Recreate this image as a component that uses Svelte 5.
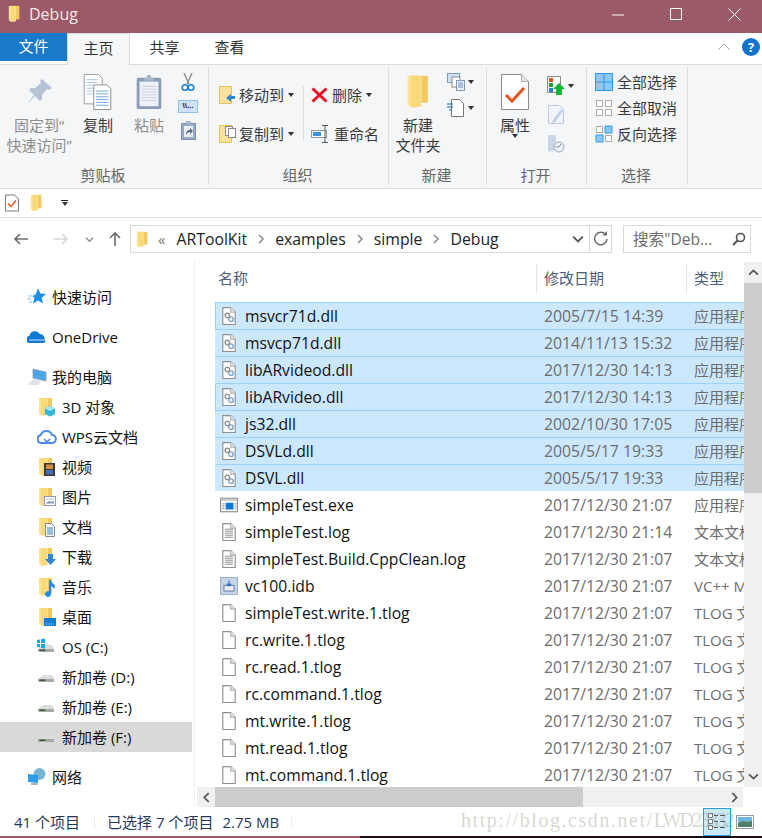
<script lang="ts">
const crumbs = ["ARToolKit", "examples", "simple", "Debug"];

const nav = [
  [{ label: "快速访问", icon: "star" }],
  [{ label: "OneDrive", icon: "cloud" }],
  [
    { label: "我的电脑", icon: "pc" },
    { label: "3D 对象", icon: "cube", sub: true },
    { label: "WPS云文档", icon: "wps", sub: true },
    { label: "视频", icon: "film", sub: true },
    { label: "图片", icon: "pic", sub: true },
    { label: "文档", icon: "doc", sub: true },
    { label: "下载", icon: "down", sub: true },
    { label: "音乐", icon: "music", sub: true },
    { label: "桌面", icon: "desk", sub: true },
    { label: "OS (C:)", icon: "osdrive", sub: true },
    { label: "新加卷 (D:)", icon: "drive", sub: true },
    { label: "新加卷 (E:)", icon: "drive", sub: true },
    { label: "新加卷 (F:)", icon: "drive", sub: true, active: true }
  ],
  [{ label: "网络", icon: "net" }]
];

const files = [
  { name: "msvcr71d.dll", date: "2005/7/15 14:39", type: "应用程序扩展", icon: "dll", sel: true, boxed: true },
  { name: "msvcp71d.dll", date: "2014/11/13 15:32", type: "应用程序扩展", icon: "dll", sel: true },
  { name: "libARvideod.dll", date: "2017/12/30 14:13", type: "应用程序扩展", icon: "dll", sel: true },
  { name: "libARvideo.dll", date: "2017/12/30 14:13", type: "应用程序扩展", icon: "dll", sel: true, boxed: true },
  { name: "js32.dll", date: "2002/10/30 17:05", type: "应用程序扩展", icon: "dll", sel: true },
  { name: "DSVLd.dll", date: "2005/5/17 19:33", type: "应用程序扩展", icon: "dll", sel: true },
  { name: "DSVL.dll", date: "2005/5/17 19:33", type: "应用程序扩展", icon: "dll", sel: true },
  { name: "simpleTest.exe", date: "2017/12/30 21:07", type: "应用程序", icon: "exe" },
  { name: "simpleTest.log", date: "2017/12/30 21:14", type: "文本文档", icon: "log" },
  { name: "simpleTest.Build.CppClean.log", date: "2017/12/30 21:07", type: "文本文档", icon: "log" },
  { name: "vc100.idb", date: "2017/12/30 21:07", type: "VC++ Minimal", icon: "idb" },
  { name: "simpleTest.write.1.tlog", date: "2017/12/30 21:07", type: "TLOG 文件", icon: "blank" },
  { name: "rc.write.1.tlog", date: "2017/12/30 21:07", type: "TLOG 文件", icon: "blank" },
  { name: "rc.read.1.tlog", date: "2017/12/30 21:07", type: "TLOG 文件", icon: "blank" },
  { name: "rc.command.1.tlog", date: "2017/12/30 21:07", type: "TLOG 文件", icon: "blank" },
  { name: "mt.write.1.tlog", date: "2017/12/30 21:07", type: "TLOG 文件", icon: "blank" },
  { name: "mt.read.1.tlog", date: "2017/12/30 21:07", type: "TLOG 文件", icon: "blank" },
  { name: "mt.command.1.tlog", date: "2017/12/30 21:07", type: "TLOG 文件", icon: "blank" }
];
</script>

{#snippet folderShape()}
  <path d="M3 1h11v15H3z" fill="#f2c95f" />
  <path d="M1 1h8l1 1v16l-6 1-3-2z" fill="#fbe29a" />
  <path d="M3 1h6v17H3z" fill="#fad978" />
{/snippet}

{#snippet folder(w = 16, h = 20)}
  <svg width={w} height={h} viewBox="0 0 16 20" preserveAspectRatio="none">{@render folderShape()}</svg>
{/snippet}

{#snippet pageShape(lines = 0)}
  <path d="M2.5.5h7l4 4v11h-11z" fill="#fff" stroke="#8f8f8f" />
  <path d="M9.5.5v4h4" fill="#eee" stroke="#b0b0b0" />
  {#each Array(lines) as _, i}
    <path d={`M4.5 ${5.5 + i * 1.8}h7`} stroke="#9c9c9c" stroke-width="1" />
  {/each}
{/snippet}

{#snippet fileIcon(kind)}
  <svg width="18" height="18" viewBox="0 0 16 16">
    {#if kind === "dll"}
      {@render pageShape()}
      <circle cx="6.5" cy="7.5" r="2" fill="none" stroke="#8d8d8d" stroke-width="1.2" />
      <circle cx="9.8" cy="10.8" r="2" fill="none" stroke="#7d9fc0" stroke-width="1.2" />
    {:else if kind === "exe"}
      <rect x=".5" y="2" width="15" height="12" fill="#fff" stroke="#8c8c8c" />
      <rect x="1" y="2.5" width="14" height="2" fill="#c9cdd2" />
      <rect x="5" y="6" width="7" height="6" fill="#0a78d7" />
      <path d="M2 7h2M2 9h2M2 11h2M13 7h1.500M13 9h1.500M13 11h1.500" stroke="#9a9a9a" />
    {:else if kind === "log"}
      {@render pageShape(5)}
    {:else if kind === "idb"}
      <rect x=".5" y=".5" width="15" height="15" fill="#c8d6ea" stroke="#9db2cf" />
      <rect x="3.500" y="7.500" width="9" height="5" fill="#e8eef6" stroke="#7088aa" />
      <path d="M8 3v5M6 6l2 2 2-2" stroke="#2d6fb5" fill="none" />
    {:else}
      {@render pageShape()}
    {/if}
  </svg>
{/snippet}

{#snippet driveShape()}
  <path d="M1 12l5-4h9l2 4v2H1z" fill="#dcdcdc" />
  <path d="M1 12h16v3H2l-1-1z" fill="#a9a9a9" />
  <rect x="2.500" y="12.500" width="6" height="1.500" fill="#3d5a3d" />
{/snippet}

{#snippet navIcon(kind)}
  <svg width="20" height="20" viewBox="0 0 20 20">
    {#if kind === "star"}
      <path d="M11 1l2.300 5.500 5.700.5-4.300 3.800 1.300 5.700-5-3-5 3 1.300-5.700-2-1.800 3.400-1.500z" fill="#1f8fe6" />
      <path d="M1 9h4M0 12h4M2 15h3" stroke="#7fc4f3" stroke-width="1.200" />
    {:else if kind === "cloud"}
      <path d="M3 16a3.500 3.500 0 0 1-.5-7 5.500 5.500 0 0 1 10.200-2 4.500 4.500 0 0 1 4.800 4.500A2.800 2.800 0 0 1 17 16z" fill="#0f78d4" />
      <path d="M2 13h17" stroke="#fff" stroke-width=".8" />
    {:else if kind === "pc"}
      <path d="M6 2l13 3v9L6 11z" fill="#4aa6e8" stroke="#8a9aa8" stroke-width=".7" />
      <path d="M1 17l6-5 8 2-4 4H3z" fill="#dfe3e6" />
    {:else if kind === "wps"}
      <path d="M5.500 17a4 4 0 0 1-.8-7.900 6 6 0 0 1 11.300-.2 4 4 0 0 1-.5 8.100z" fill="#fff" stroke="#4f8bea" stroke-width="2" transform="translate(-1 -1)" />
      <path d="M7 12l3 3 3-3" fill="none" stroke="#4f8bea" stroke-width="1.600" />
    {:else if kind === "net"}
      <circle cx="12.500" cy="7" r="6" fill="#7ab4cf" />
      <path d="M1 7l10 1v8l-10-1z" fill="#2e9be6" />
      <path d="M4 16h6l1 2H4z" fill="#a9b4bb" />
    {:else if kind === "drive"}
      {@render driveShape()}
    {:else if kind === "osdrive"}
      {@render driveShape()}
      <path d="M0 3l3-.5V6H0zM4 2.300L8 1.500V6H4zM0 7h3v3.500L0 10zM4 7h4v4.500L4 11z" fill="#10a8ee" />
    {:else}
      <g transform="translate(1 0)">{@render folderShape()}</g>
      {#if kind === "cube"}
        <path d="M13 9l5 2.500v5.500l-5 2.500-5-2.500v-5.500z" fill="#34b5d6" />
        <path d="M13 9l5 2.500-5 2.500-5-2.500z" fill="#a5e6f2" />
      {:else if kind === "film"}
        <rect x="7" y="6" width="11" height="13" fill="#3a3a3a" />
        <rect x="9" y="7.500" width="7" height="4.500" fill="#d88b3a" />
        <rect x="9" y="13" width="7" height="4.500" fill="#4a6fb8" />
      {:else if kind === "pic"}
        <rect x="7.500" y="9.500" width="11" height="9" fill="#fff" stroke="#8f9aa5" />
        <path d="M9 16l3-2 2 1 3-1v2.500H9z" fill="#7c93a8" />
        <path d="M9 12h8" stroke="#b9c4cc" />
      {:else if kind === "doc"}
        <path d="M8.500 6.500h6l3 3v10h-9z" fill="#fff" stroke="#7f8b96" />
        <path d="M10 11h6M10 13h6M10 15h6M10 17h6" stroke="#2d7fc4" />
      {:else if kind === "down"}
        <path d="M11 7h5v5h3l-5.500 6L8 12h3z" fill="#2f86d2" />
      {:else if kind === "music"}
        <path d="M12 3h2c0 3 4 4 4 7l-1 2c0-1-1.500-2.500-3-3v8a3 3 0 1 1-2-2.800z" fill="#1e90e8" />
      {:else if kind === "desk"}
        <rect x="7" y="11" width="12" height="8" fill="#0f7fd6" />
        <path d="M9 17h8" stroke="#fff" stroke-dasharray="1 1.500" />
      {/if}
    {/if}
  </svg>
{/snippet}

{#snippet chevron(dir = "right", stroke = "#8a8a8a", size = 10)}
  <svg class="chev" width={size} height={size} viewBox="0 0 10 10">
    {#if dir === "right"}
      <path d="M3 1l4 4-4 4" fill="none" stroke={stroke} stroke-width="1.500" />
    {:else if dir === "left"}
      <path d="M7 1L3 5l4 4" fill="none" stroke={stroke} stroke-width="1.500" />
    {:else if dir === "up"}
      <path d="M1 7l4-4 4 4" fill="none" stroke={stroke} stroke-width="1.500" />
    {:else}
      <path d="M1 3l4 4 4-4" fill="none" stroke={stroke} stroke-width="1.500" />
    {/if}
  </svg>
{/snippet}

<div class="window">
  <header class="titlebar">
    <span class="title-folder">{@render folder(13, 18)}</span>
    <span class="title-text">Debug</span>
    <div class="win-btns">
      <svg width="13" height="13" viewBox="0 0 13 13"><path d="M0 7h12" stroke="#fff" /></svg>
      <svg width="13" height="13" viewBox="0 0 13 13"><rect x=".5" y=".5" width="11" height="11" fill="none" stroke="#fff" /></svg>
      <svg width="13" height="13" viewBox="0 0 13 13"><path d="M.5.500l12 12M12.500.500l-12 12" stroke="#fff" /></svg>
    </div>
  </header>

  <nav class="tabs">
    <div class="tab file">文件</div>
    <div class="tab home">主页</div>
    <div class="tab">共享</div>
    <div class="tab">查看</div>
    <div class="tabs-right">
      <svg width="14" height="8" viewBox="0 0 14 8"><path d="M1 7l6-6 6 6" fill="none" stroke="#a9a9a9" /></svg>
      <span class="help">?</span>
    </div>
  </nav>

  <section class="ribbon">
    <div class="group clip">
      <div class="group-body">
        <div class="big pin disabled">
          <svg width="28" height="28" viewBox="0 0 28 28">
            <path d="M17 1l10 9-3 2-2-1-5 6 0 4-2 2-5-5-8 8 7-9-5-5 2-2 4 0 6-5-1-2z" fill="#b6c3d6" />
          </svg>
          <span>固定到“<br />快速访问”</span>
        </div>
        <div class="big copy">
          <svg width="32" height="38" viewBox="0 0 32 38">
            <path d="M1.500.5h15l4 4v27h-19z" fill="#fff" stroke="#9a9a9a" />
            <path d="M4 6h12M4 9h12M4 12h12M4 15h12M4 18h12M4 21h12" stroke="#a4c8ec" />
            <path d="M11.500 11.500h14l4 4v22h-18z" fill="#fff" stroke="#8a8a8a" />
            <path d="M14 18h13M14 21h13M14 24h13M14 27h13M14 30h13M14 33h13" stroke="#6aa5e2" />
          </svg>
          <span>复制</span>
        </div>
        <div class="big paste disabled">
          <svg width="28" height="38" viewBox="0 0 28 38">
            <rect x="1" y="4" width="26" height="33" rx="2" fill="#8b9cb8" />
            <rect x="4" y="8" width="20" height="26" fill="#eef1f7" />
            <path d="M6 13h16M6 16h16M6 19h16M6 22h16M6 25h16M6 28h16" stroke="#cbd3e2" />
            <path d="M9 7V4h3V1h4v3h3v3z" fill="#a7b4c9" />
          </svg>
          <span>粘贴</span>
        </div>
        <div class="clip-col">
          <svg width="14" height="19" viewBox="0 0 14 19">
            <path d="M3 0l5 11M11 0L6 11" stroke="#8a8a8a" stroke-width="1.400" />
            <circle cx="4" cy="14.500" r="2.800" fill="none" stroke="#1f7fd0" stroke-width="1.600" />
            <circle cx="10" cy="14.500" r="2.800" fill="none" stroke="#1f7fd0" stroke-width="1.600" />
          </svg>
          <span class="path-chip">\\...</span>
          <svg width="15" height="19" viewBox="0 0 15 19">
            <rect x=".5" y="2.500" width="14" height="16" fill="#98a9c4" stroke="#7f91ad" />
            <rect x="3" y="5" width="9" height="11" fill="#e9edf4" />
            <path d="M5 14c0-4 2-5 4-5V7l3 3-3 3v-2c-2 0-3 1-4 3z" fill="#56698a" />
            <rect x="5" y="0" width="5" height="3" fill="#aab6c9" />
          </svg>
        </div>
      </div>
      <div class="group-label">剪贴板</div>
    </div>

    <div class="group org">
      <div class="group-body org-body">
        <div class="org-col left">
          <div class="org-item">
            <svg width="17" height="18" viewBox="0 0 17 18">
              <rect x=".5" y=".5" width="12" height="17" fill="#fbe29a" stroke="#e6c25a" />
              <path d="M16 10v3h-4v3l-5-4 5-4v2z" fill="#2f86d2" />
            </svg>
            <span>移动到</span><i class="caret"></i>
          </div>
          <div class="org-item">
            <svg width="17" height="18" viewBox="0 0 17 18">
              <rect x=".5" y=".5" width="12" height="17" fill="#fbe29a" stroke="#e6c25a" />
              <rect x="6.500" y="1.500" width="7" height="9" fill="#fff" stroke="#8a8a8a" />
              <rect x="9.500" y="3.500" width="7" height="9" fill="#fff" stroke="#8a8a8a" />
            </svg>
            <span>复制到</span><i class="caret"></i>
          </div>
        </div>
        <div class="org-sep"></div>
        <div class="org-col right">
          <div class="org-item">
            <svg width="17" height="16" viewBox="0 0 17 16"><path d="M1.500 1.500l14 13M15.500 1.500l-14 13" stroke="#e81123" stroke-width="3" /></svg>
            <span>删除</span><i class="caret"></i>
          </div>
          <div class="org-item">
            <svg width="19" height="18" viewBox="0 0 19 18">
              <rect x=".5" y="5.500" width="15" height="7" fill="#fff" stroke="#8a9aa8" />
              <rect x="2" y="7" width="8" height="4" fill="#3c93dc" />
              <path d="M11 .5h6M14 .5v17M11 17.500h6" stroke="#555" fill="none" />
            </svg>
            <span>重命名</span>
          </div>
        </div>
      </div>
      <div class="group-label">组织</div>
    </div>

    <div class="group new">
      <div class="group-body new-body">
        <div class="big folderbtn">
          {@render folder(25, 36)}
          <span>新建<br />文件夹</span>
        </div>
        <div class="small-col">
          <div class="mini">
            <svg width="18" height="18" viewBox="0 0 18 18">
              <rect x=".5" y=".5" width="12" height="9" fill="#cfe3f5" stroke="#7f9ab5" />
              <rect x="5" y="4" width="8" height="10" fill="#fff" stroke="#8a8a8a" />
              <rect x="9.500" y="7.500" width="8" height="10" fill="#e8effa" stroke="#7f9ab5" />
              <path d="M11 10h5M11 12h5M11 14h5" stroke="#6b93c4" />
            </svg>
            <i class="caret"></i>
          </div>
          <div class="mini">
            <svg width="18" height="18" viewBox="0 0 18 18">
              <path d="M4.500.5h8l4 4v13h-12z" fill="#fff" stroke="#777" />
              <path d="M0 5h6M0 8h6M2 11h3" stroke="#1668b8" stroke-width="1.200" />
            </svg>
            <i class="caret"></i>
          </div>
        </div>
      </div>
      <div class="group-label">新建</div>
    </div>

    <div class="group open">
      <div class="group-body open-body">
        <div class="big prop">
          <svg width="28" height="36" viewBox="0 0 28 36">
            <path d="M.5.500h20l7 7v28h-27z" fill="#fff" stroke="#8a8a8a" />
            <path d="M20.500.500v7h7" fill="#e6e6e6" stroke="#aaa" />
            <path d="M5 21l6 6 12-13" fill="none" stroke="#e8531f" stroke-width="3" />
          </svg>
          <span>属性</span>
          <i class="caret"></i>
        </div>
        <div class="small-col open-col">
          <div class="mini">
            <svg width="18" height="19" viewBox="0 0 18 19">
              <path d="M.5.500h13v16H.5z" fill="#fff" stroke="#8a8a8a" />
              <rect x="2" y="2" width="4" height="4" fill="#e8531f" />
              <rect x="2" y="7" width="4" height="4" fill="#15a32f" />
              <rect x="2" y="12" width="4" height="4" fill="#1f86d8" />
              <path d="M12 7l6 6h-3v6H9v-6H6z" fill="#14b334" />
            </svg>
            <i class="caret"></i>
          </div>
          <div class="mini">
            <svg width="18" height="19" viewBox="0 0 18 19">
              <path d="M1.500.5h11l4 4v14h-15z" fill="#f1f5fb" stroke="#b9c8dd" />
              <path d="M6 15L14 4l2 2-8 11-3 1z" fill="#c3d2e6" />
            </svg>
          </div>
          <div class="mini">
            <svg width="18" height="19" viewBox="0 0 18 19">
              <path d="M1 1h7l1 1v14l-8 2z" fill="#c8d6e8" />
              <circle cx="12" cy="13" r="5" fill="#eef2f7" stroke="#97a8bd" />
              <path d="M12 13l2-3M12 13H9" stroke="#7f91a8" />
            </svg>
          </div>
        </div>
      </div>
      <div class="group-label">打开</div>
    </div>

    <div class="group select">
      <div class="group-body select-body">
        <div class="sel-item">
          <svg width="18" height="18" viewBox="0 0 18 18"><rect x=".5" y=".5" width="17" height="17" fill="#8ec8f2" stroke="#2e9be6" /><path d="M9 0v18M0 9h18" stroke="#2e9be6" /></svg>
          <span>全部选择</span>
        </div>
        <div class="sel-item">
          <svg width="18" height="18" viewBox="0 0 18 18"><path d="M1.500 1.500h6v6h-6zM10.500 1.500h6v6h-6zM1.500 10.500h6v6h-6zM10.500 10.500h6v6h-6z" fill="#fff" stroke="#a9a9a9" /></svg>
          <span>全部取消</span>
        </div>
        <div class="sel-item">
          <svg width="18" height="18" viewBox="0 0 18 18">
            <path d="M1.500 1.500h6v6h-6zM10.500 10.500h6v6h-6z" fill="#fff" stroke="#a9a9a9" />
            <path d="M10 1h7v7h-7zM1 10h7v7H1z" fill="#8ec8f2" stroke="#2e9be6" />
          </svg>
          <span>反向选择</span>
        </div>
      </div>
      <div class="group-label">选择</div>
    </div>
  </section>

  <div class="quick">
    <svg width="14" height="18" viewBox="0 0 14 17">
      <path d="M.5.500h9l4 4v12H.5z" fill="#fff" stroke="#777" />
      <path d="M3 9l3 3 5-6" fill="none" stroke="#e8531f" stroke-width="1.500" />
    </svg>
    {@render folder(13, 18)}
    <span class="quick-more"><b></b><i class="caret"></i></span>
  </div>

  <div class="addressbar">
    <svg class="nav-arrow" width="16" height="14" viewBox="0 0 16 14"><path d="M15 7H2M7 2L2 7l5 5" fill="none" stroke="#6e6e6e" stroke-width="1.600" /></svg>
    <svg class="nav-arrow forward" width="16" height="14" viewBox="0 0 16 14"><path d="M1 7h13M9 2l5 5-5 5" fill="none" stroke="#d6d6d6" stroke-width="1.600" /></svg>
    <span class="nav-down">{@render chevron("down", "#8c8c8c", 9)}</span>
    <svg class="nav-arrow up" width="14" height="16" viewBox="0 0 14 16"><path d="M7 15V2M2 7l5-5 5 5" fill="none" stroke="#6e6e6e" stroke-width="1.600" /></svg>
    <div class="address">
      <span class="addr-folder">{@render folder(13, 17)}</span>
      <span class="addr-more">«</span>
      {#each crumbs as c, i}
        <span class="crumb">{c}</span>
        {#if i < crumbs.length - 1}
          {@render chevron("right", "#8a8a8a", 10)}
        {/if}
      {/each}
      <span class="addr-drop">{@render chevron("down", "#555", 12)}</span>
      <span class="addr-refresh">
        <svg width="16" height="16" viewBox="0 0 16 16"><path d="M12.500 3.500a6.200 6.200 0 1 0 1.500 4.500" fill="none" stroke="#6e6e6e" stroke-width="1.500" /><path d="M9.500 4.500h4.500V0z" fill="#6e6e6e" /></svg>
      </span>
    </div>
    <div class="search">
      <span>搜索"Deb...</span>
      <svg width="14" height="14" viewBox="0 0 14 14"><circle cx="8.500" cy="5.500" r="4" fill="none" stroke="#555" stroke-width="1.600" /><path d="M5.500 8.500L1 13" stroke="#555" stroke-width="2" /></svg>
    </div>
  </div>

  <main class="main">
    <aside class="sidebar">
      {#each nav as section}
        <div class="nav-section">
          {#each section as item}
            <div class="nav-item" class:sub={item.sub} class:active={item.active}>
              {@render navIcon(item.icon)}
              <span>{item.label}</span>
            </div>
          {/each}
        </div>
      {/each}
    </aside>

    <div class="content">
      <div class="list-area">
        <div class="list">
          <div class="list-head">
            <div class="col">名称</div>
            <div class="col">修改日期</div>
            <div class="col">类型</div>
          </div>
          {#each files as f}
            <div class="row" class:sel={f.sel} class:boxed={f.boxed}>
              <div class="cell-name">{@render fileIcon(f.icon)}<span>{f.name}</span></div>
              <div class="cell-meta date">{f.date}</div>
              <div class="cell-meta">{f.type}</div>
            </div>
          {/each}
        </div>
        <div class="vscroll">
          <div class="sb-btn up-btn">{@render chevron("up", "#505050", 11)}</div>
          <div class="v-thumb"></div>
          <div class="v-track"></div>
          <div class="sb-btn">{@render chevron("down", "#505050", 11)}</div>
        </div>
      </div>
      <div class="hscroll">
        <div class="hs-btn">{@render chevron("left", "#505050", 11)}</div>
        <div class="h-thumb"></div>
        <div class="h-track"></div>
        <div class="hs-btn">{@render chevron("right", "#505050", 11)}</div>
      </div>
    </div>
  </main>

  <footer class="status">
    <span class="count">41 个项目</span>
    <span class="st-sep"></span>
    <span class="chosen">已选择 7 个项目</span>
    <span class="size">2.75 MB</span>
    <span class="st-sep second"></span>
    <div class="views">
      <div class="view on">
        <svg width="18" height="17" viewBox="0 0 18 17">
          <path d="M.5.500h4v4h-4zM.5 6.500h4v4h-4zM.5 12.500h4v4h-4z" fill="#fff" stroke="#777" />
          <path d="M6 2.500h4M12 2.500h5M6 8.500h4M12 8.500h5M6 14.500h4M12 14.500h5" stroke="#555" />
        </svg>
      </div>
      <svg class="view-thumb" width="18" height="14" viewBox="0 0 18 14">
        <rect x=".5" y=".5" width="17" height="13" fill="#fff" stroke="#8f9aa5" />
        <rect x="2" y="2" width="14" height="6" fill="#6fb5dc" />
        <path d="M2 8l5-2 4 1 5-1v6H2z" fill="#4f7f68" />
      </svg>
    </div>
    <span class="watermark">http://blog.csdn.net/<span class="wm-tail">LWD23332</span></span>
  </footer>
  <div class="edge"><span></span></div>
</div>

<style>
:global(body) {
  margin: 0;
  background: #fff;
}
.window {
  width: 762px;
  height: 838px;
  display: flex;
  flex-direction: column;
  overflow: hidden;
  font: 15px/20px "Open Sans", "Noto Sans CJK SC", sans-serif;
  color: #1a1a1a;
}
svg {
  display: block;
  flex: none;
}
.caret {
  display: inline-block;
  width: 0;
  height: 0;
  border: 3.5px solid transparent;
  border-top: 4px solid #333;
  border-bottom: 0;
}

.titlebar {
  height: 33px;
  box-sizing: border-box;
  padding: 0 0 5px 8px;
  background: #9b5a68;
  display: flex;
  align-items: center;
  color: #f3e7ea;
}
.title-text {
  margin-left: 8px;
  font-size: 16px;
}
.win-btns {
  margin-left: auto;
  display: flex;
  gap: 45px;
  padding-right: 21px;
}

.tabs {
  height: 32px;
  display: flex;
  box-sizing: border-box;
  border-bottom: 1px solid #dadbdc;
  background: #fff;
}
.tab {
  width: 65px;
  text-align: center;
  line-height: 29px;
  color: #333;
  flex: none;
}
.tab.file {
  width: 67px;
  height: 28px;
  line-height: 27px;
  background: #1979ca;
  color: #fff;
}
.tab.home {
  width: 63px;
  height: 32px;
  background: #f5f6f7;
  border: 1px solid #dadbdc;
  border-bottom: 0;
  box-sizing: border-box;
  margin-right: 2px;
}
.tabs-right {
  margin-left: auto;
  display: flex;
  align-items: center;
  gap: 11px;
  padding-bottom: 4px;
  padding-right: 2px;
}
.help {
  width: 18px;
  height: 18px;
  border-radius: 50%;
  background: #1272cc;
  color: #fff;
  font: bold 13px/18px "Open Sans", sans-serif;
  text-align: center;
}

.ribbon {
  height: 124px;
  display: flex;
  background: #f5f6f7;
  border-bottom: 1px solid #dadbdc;
  box-sizing: border-box;
  color: #3a3a3a;
}
.group {
  display: flex;
  flex-direction: column;
  border-right: 1px solid #dfe0e1;
  margin: 2px 0 3px;
  box-sizing: border-box;
  flex: none;
}
.group-body {
  flex: 1;
  display: flex;
}
.group-label {
  height: 20px;
  padding-right: 2px;
  line-height: 20px;
  text-align: center;
  color: #666;
}
.big {
  display: flex;
  flex-direction: column;
  align-items: center;
  text-align: center;
  flex: none;
  white-space: nowrap;
}
.big svg {
  margin-top: 7px;
  height: 36px;
}
.big span {
  margin-top: 5px;
}
.disabled {
  color: #8d8d8d;
}
.clip {
  width: 209px;
}
.pin {
  width: 78px;
}
.copy {
  width: 40px;
}
.paste {
  width: 40px;
  margin-left: 11px;
}
.clip-col {
  width: 26px;
  margin-left: 6px;
  padding-top: 6px;
  display: flex;
  flex-direction: column;
  align-items: center;
  gap: 8px;
}
.path-chip {
  display: block;
  width: 18px;
  height: 11px;
  border: 1px solid #8fc0ea;
  background: #cfe3f5;
  font: bold 8px/10px "Liberation Sans", sans-serif;
  color: #222;
  text-align: center;
  overflow: hidden;
}
.org {
  width: 180px;
}
.org-body {
  padding: 8px 0 0 10px;
}
.org-col {
  display: flex;
  flex-direction: column;
}
.org-col.left {
  width: 84px;
}
.org-col.right {
  margin-left: 7px;
}
.org-item {
  height: 39px;
  display: flex;
  align-items: center;
  gap: 4px;
  white-space: nowrap;
}
.org-col.left .org-item {
  gap: 3px;
}
.org-col.left .caret {
  margin-left: 1px;
}
.org-sep {
  width: 1px;
  height: 55px;
  margin-top: 11px;
  background: #dcdddf;
}
.new {
  width: 98px;
}
.folderbtn {
  width: 58px;
}
.folderbtn span {
  margin-top: 5px;
}
.small-col {
  display: flex;
  flex-direction: column;
  gap: 8px;
  padding-top: 6px;
}
.mini {
  display: flex;
  align-items: center;
  gap: 3px;
}
.open {
  width: 100px;
}
.prop {
  width: 56px;
}
.prop span {
  margin-top: 6px;
  line-height: 18px;
}
.open-col {
  margin-left: 4px;
  padding-top: 9px;
  gap: 10px;
}
.select {
  width: 101px;
}
.select-body {
  flex-direction: column;
  padding: 5px 0 0 8px;
  gap: 6px;
}
.sel-item {
  display: flex;
  align-items: center;
  gap: 4px;
  height: 20px;
  white-space: nowrap;
}

.quick {
  height: 29px;
  box-sizing: border-box;
  border-bottom: 1px solid #e3e3e3;
  display: flex;
  align-items: center;
  padding-left: 5px;
  gap: 11px;
}
.quick-more {
  margin-left: 7px;
  display: flex;
  flex-direction: column;
  gap: 1px;
  align-items: center;
}
.quick-more b {
  width: 7px;
  height: 1px;
  background: #222;
}
.addressbar {
  height: 42px;
  display: flex;
  align-items: center;
  padding: 0 0 0 13px;
  flex: none;
}
.nav-arrow.forward {
  margin-left: 24px;
}
.nav-down {
  margin-left: 16px;
}
.nav-arrow.up {
  margin-left: 14px;
}
.address {
  margin-left: 8px;
  width: 482px;
  height: 28px;
  box-sizing: border-box;
  border: 1px solid #d9d9d9;
  display: flex;
  align-items: center;
  padding-left: 5px;
  gap: 5px;
  flex: none;
  color: #222;
}
.addr-more {
  margin-left: 4px;
  color: #777;
  margin-right: 2px;
}
.crumb {
  padding: 0 4px;
  font-size: 15.8px;
}
.addr-drop {
  margin-left: auto;
}
.addr-refresh {
  width: 21px;
  height: 26px;
  border-left: 1px solid #d9d9d9;
  display: flex;
  align-items: center;
  justify-content: center;
}
.search {
  margin-left: 11px;
  width: 128px;
  height: 28px;
  box-sizing: border-box;
  border: 1px solid #d9d9d9;
  display: flex;
  align-items: center;
  padding: 0 4px 0 9px;
  justify-content: space-between;
  color: #6d6d6d;
  font-size: 15.6px;
  flex: none;
}

.main {
  flex: 1;
  min-height: 0;
  display: flex;
}
.sidebar {
  width: 192px;
  margin-right: 5px;
  padding-top: 22px;
  flex: none;
  display: flex;
  flex-direction: column;
  gap: 10px;
  box-shadow: 2px 0 0 #fff, 3px 0 0 #f0f0f0;
}
.nav-item {
  height: 30px;
  display: flex;
  align-items: center;
  padding-left: 27px;
  gap: 5px;
  color: #111;
  white-space: nowrap;
}
.nav-item.sub {
  padding-left: 37px;
}
.nav-item.active {
  background: #d9d9d9;
}
.content {
  flex: 1;
  min-width: 0;
  display: flex;
  flex-direction: column;
}
.list-area {
  flex: 1;
  min-height: 0;
  display: flex;
}
.list {
  flex: 1;
  min-width: 0;
  overflow: hidden;
  padding-left: 18px;
}
.list-head {
  height: 42px;
  display: grid;
  grid-template-columns: 322px 150px 1fr;
  color: #4c607a;
  padding-top: 3px;
  box-sizing: border-box;
}
.col {
  height: 30px;
  line-height: 30px;
  padding-left: 3px;
  border-right: 1px solid #e5e5e5;
}
.col + .col {
  padding-left: 7px;
}
.col:last-child {
  border-right: 0;
}
.row {
  height: 27px;
  box-sizing: border-box;
  display: grid;
  grid-template-columns: 322px 150px 1fr;
  align-items: center;
  border-top: 1px solid transparent;
  white-space: nowrap;
}
.row.sel {
  background: #cce8ff;
  border-top-color: #99d1ff;
}
.row.boxed {
  box-shadow: inset 1px 0 0 #99d1ff;
}
.cell-name {
  display: flex;
  align-items: center;
  padding-left: 5px;
  gap: 7px;
  color: #111;
  font-size: 15.7px;
}
.cell-meta {
  padding-left: 7px;
  color: #6d6d6d;
  overflow: hidden;
}
.cell-meta.date {
  font-size: 15.8px;
}
.vscroll {
  width: 18px;
  padding-top: 2px;
  display: flex;
  flex-direction: column;
  background: #fff;
}
.sb-btn {
  height: 21px;
  background: #f0f0f0;
  display: flex;
  align-items: center;
  justify-content: center;
  flex: none;
}
.v-thumb {
  height: 210px;
  background: #cdcdcd;
  flex: none;
}
.v-track {
  flex: 1;
  background: #f0f0f0;
}
.hscroll {
  height: 20px;
  margin-right: 19px;
  display: flex;
  background: #f0f0f0;
  flex: none;
}
.hs-btn {
  width: 18px;
  display: flex;
  align-items: center;
  justify-content: center;
  flex: none;
}
.h-thumb {
  width: 368px;
  background: #cdcdcd;
  flex: none;
}
.h-track {
  flex: 1;
}

.status {
  height: 29px;
  display: flex;
  align-items: center;
  position: relative;
  padding-left: 14px;
  color: #1e395b;
  flex: none;
}
.st-sep {
  width: 1px;
  height: 14px;
  background: #eee;
  margin: 0 12px 0 14px;
}
.st-sep.second {
  margin-left: 12px;
}
.size {
  margin-left: 9px;
}
.views {
  margin-left: auto;
  display: flex;
  align-items: center;
  gap: 5px;
  padding-right: 8px;
}
.view {
  width: 28px;
  height: 28px;
  box-sizing: border-box;
  border: 1px solid #26a0da;
  background: #cbe8f6;
  display: flex;
  align-items: center;
  justify-content: center;
}
.watermark {
  position: absolute;
  left: 461px;
  top: 2px;
  font: 20px/22px "Liberation Serif", serif;
  letter-spacing: 1.56px;
  color: rgba(110, 110, 90, 0.28);
  white-space: nowrap;
  pointer-events: none;
}
.wm-tail {
  letter-spacing: -1.9px;
}
.edge {
  height: 2px;
  background: #1f0a10;
  flex: none;
}
.edge span {
  display: block;
  width: 360px;
  height: 2px;
  background: #9b5a68;
}
</style>
